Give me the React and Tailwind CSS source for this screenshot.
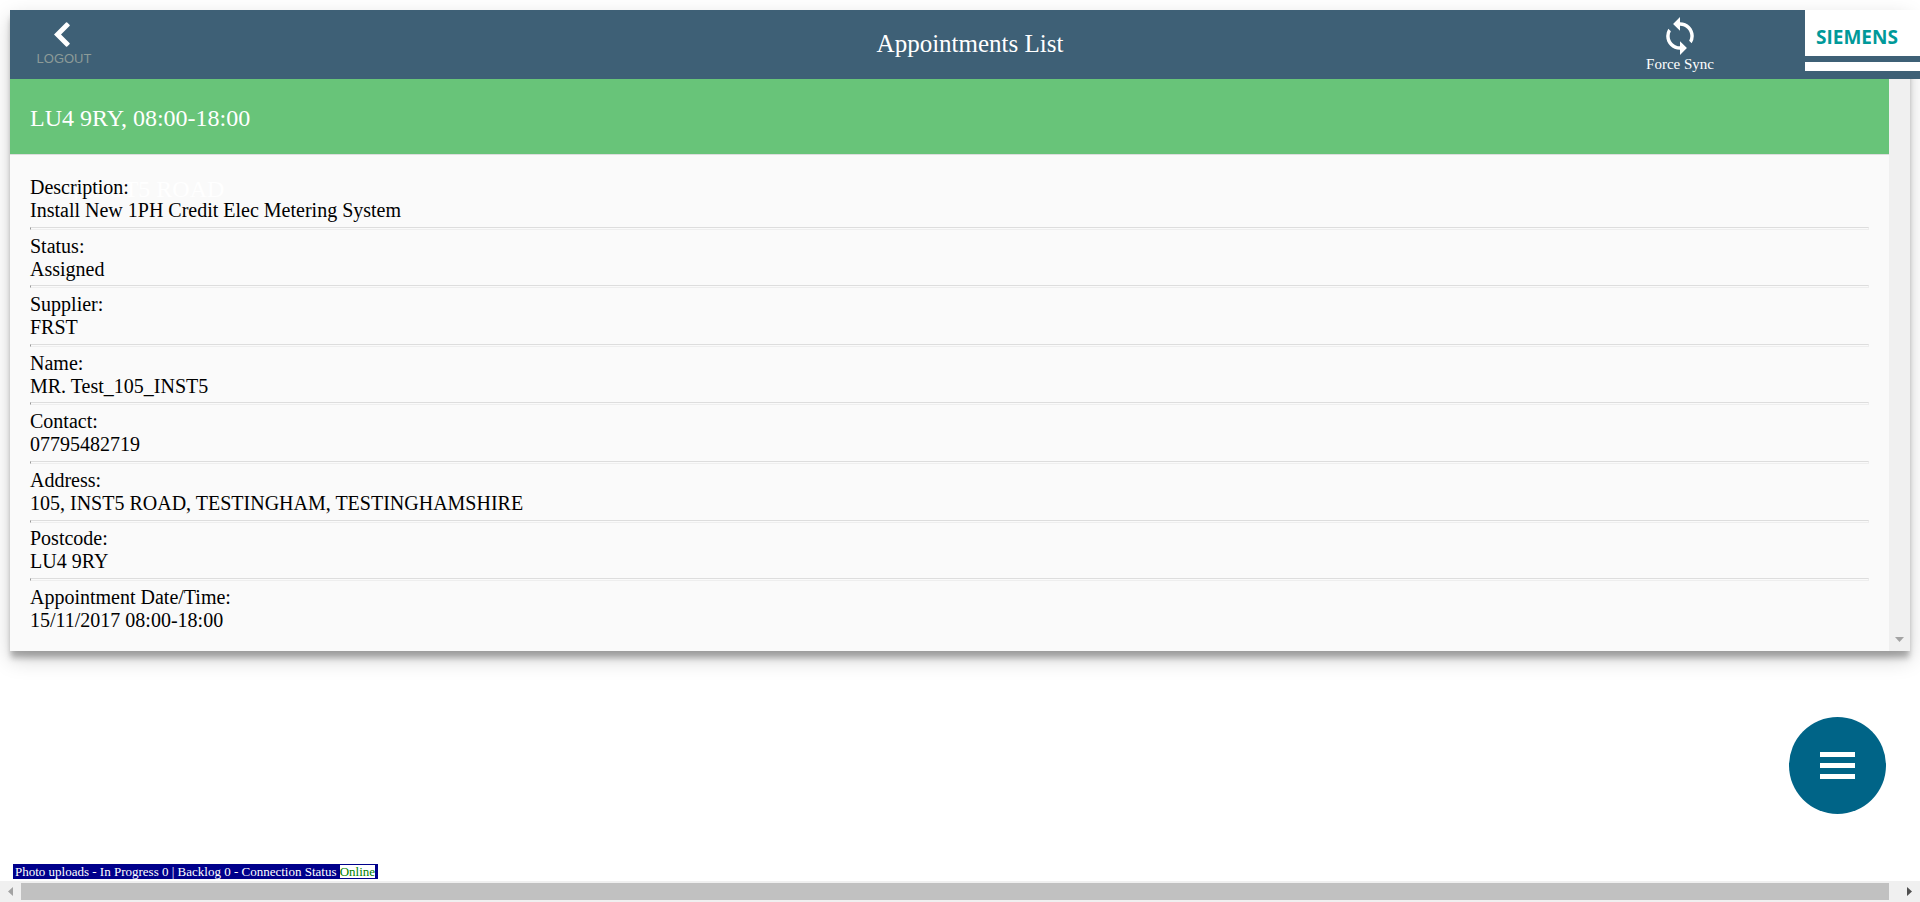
const fields = [
  ["Description:", "Install New 1PH Credit Elec Metering System"],
  ["Status:", "Assigned"],
  ["Supplier:", "FRST"],
  ["Name:", "MR. Test_105_INST5"],
  ["Contact:", "07795482719"],
  ["Address:", "105, INST5 ROAD, TESTINGHAM, TESTINGHAMSHIRE"],
  ["Postcode:", "LU4 9RY"],
  ["Appointment Date/Time:", "15/11/2017 08:00-18:00"],
];

function Header() {
  return (
    <header className="-mr-[10px] grid h-[69px] grid-cols-[1fr_auto_1fr] items-start bg-[#3e6076] text-white">
      <button type="button" className="ml-[27px] flex w-[54px] flex-col items-center pt-3 font-['Liberation_Sans',sans-serif] text-[13px] leading-4 text-[#8c9b98]">
        <svg viewBox="0 0 16 25" className="mr-1 mb-1 h-[25px] w-4" aria-hidden="true">
          <path d="M0 12.500 12 .5q.6-.5 1.200 0l2.300 2.300q.6.6 0 1.200L7 12.500l8.500 8.500q.6.6 0 1.200l-2.300 2.300q-.6.5-1.200 0Z" fill="white" />
        </svg>
        LOGOUT
      </button>
      <h1 className="pt-5 pl-[10px] text-[25px] leading-7">Appointments List</h1>
      <div className="flex items-start justify-end">
        <button type="button" className="mr-[91px] flex flex-col items-center pt-[7px] text-[15px] leading-[17px]">
          <svg viewBox="4 1 16 22" className="mb-px h-[38px] w-7" aria-hidden="true" fill="white">
            <path d="M12 4V1L8 5l4 4V6c3.310 0 6 2.690 6 6 0 1.010-.25 1.970-.7 2.800l1.460 1.460A7.930 7.930 0 0 0 20 12c0-4.420-3.580-8-8-8zm0 14c-3.310 0-6-2.690-6-6 0-1.010.25-1.970.7-2.800L5.240 7.740A7.930 7.930 0 0 0 4 12c0 4.420 3.580 8 8 8v3l4-4-4-4v3z" />
          </svg>
          Force Sync
        </button>
        <div className="h-[61px] w-[115px] bg-white">
          <div className="flex h-[46px] items-center pt-2 pl-[11px] font-['Open_Sans',sans-serif] text-[19px] leading-6 font-bold text-[#009999]">SIEMENS</div>
          <div className="h-[6px] bg-[#3e6076]" />
        </div>
      </div>
    </header>
  );
}

export default function App() {
  return (
    <div className="flex min-h-screen flex-col overflow-hidden bg-white pt-[10px] font-['Liberation_Serif',serif] text-black">
      <div className="mx-[10px] shadow-[0_8px_6px_-1px_rgba(0,0,0,0.26),0_8px_20px_rgba(0,0,0,0.18),0_3px_4px_rgba(0,0,0,0.04)]">
        <Header />
        <main className="flex">
          <section className="relative grow bg-[#fafafa]">
            <h2 className="flex h-[76px] items-center border-b border-[#ddd] bg-[#68c479] px-5 pt-[2px] text-[24px] leading-7 text-white">LU4 9RY, 08:00-18:00</h2>
            <div className="absolute top-24 left-[27px] text-[24px] leading-7 text-white">105, INST5 ROAD</div>
            <dl className="relative flex h-[496px] flex-col justify-between px-5 pt-[21px] pb-[19px] text-[20px] leading-[23px]">
              {fields.map(([label, value], i) => (
                <div key={label} className="contents">
                  {i > 0 && <hr className="h-[3px] border border-[#eee] border-t-[#ddd] border-l-[#999]" />}
                  <div>
                    <dt>{label}</dt>
                    <dd>{value}</dd>
                  </div>
                </div>
              ))}
            </dl>
          </section>
          <div className="flex w-[21px] items-end justify-center bg-[#f0f0f0] pb-[9px]">
            <svg viewBox="0 0 9 5" className="h-[5px] w-[9px]" aria-hidden="true"><path d="M0 0h9L4.500 5Z" fill="#a3a3a3" /></svg>
          </div>
        </main>
      </div>
      <button type="button" aria-label="Menu" className="mt-[66px] mr-[34px] flex size-[97px] flex-col items-center justify-center gap-[6px] self-end rounded-full bg-[#006487]">
        <span className="h-[5px] w-[35px] bg-white" />
        <span className="h-[5px] w-[35px] bg-white" />
        <span className="h-[5px] w-[35px] bg-white" />
      </button>
      <footer className="mt-auto">
        <p className="mb-[2px] ml-[13px] flex h-[15px] w-fit items-center bg-[#00008b] pr-[3px] pl-[2px] text-[13px] leading-[13px] whitespace-pre text-white">
          Photo uploads - In Progress 0 | Backlog 0 - Connection Status <span className="bg-white text-[#008000]">Online</span>
        </p>
        <div className="flex h-[21px] items-center bg-[#f0f0f0]">
          <div className="flex w-[21px] justify-center"><svg viewBox="0 0 5 9" className="h-[9px] w-[5px]" aria-hidden="true"><path d="M5 0v9L0 4.500Z" fill="#a3a3a3" /></svg></div>
          <div className="h-[17px] grow bg-[#c1c1c1]" />
          <div className="flex w-[31px] justify-end pr-2"><svg viewBox="0 0 5 9" className="h-[9px] w-[5px]" aria-hidden="true"><path d="M0 0v9l5-4.500Z" fill="#505050" /></svg></div>
        </div>
      </footer>
    </div>
  );
}
